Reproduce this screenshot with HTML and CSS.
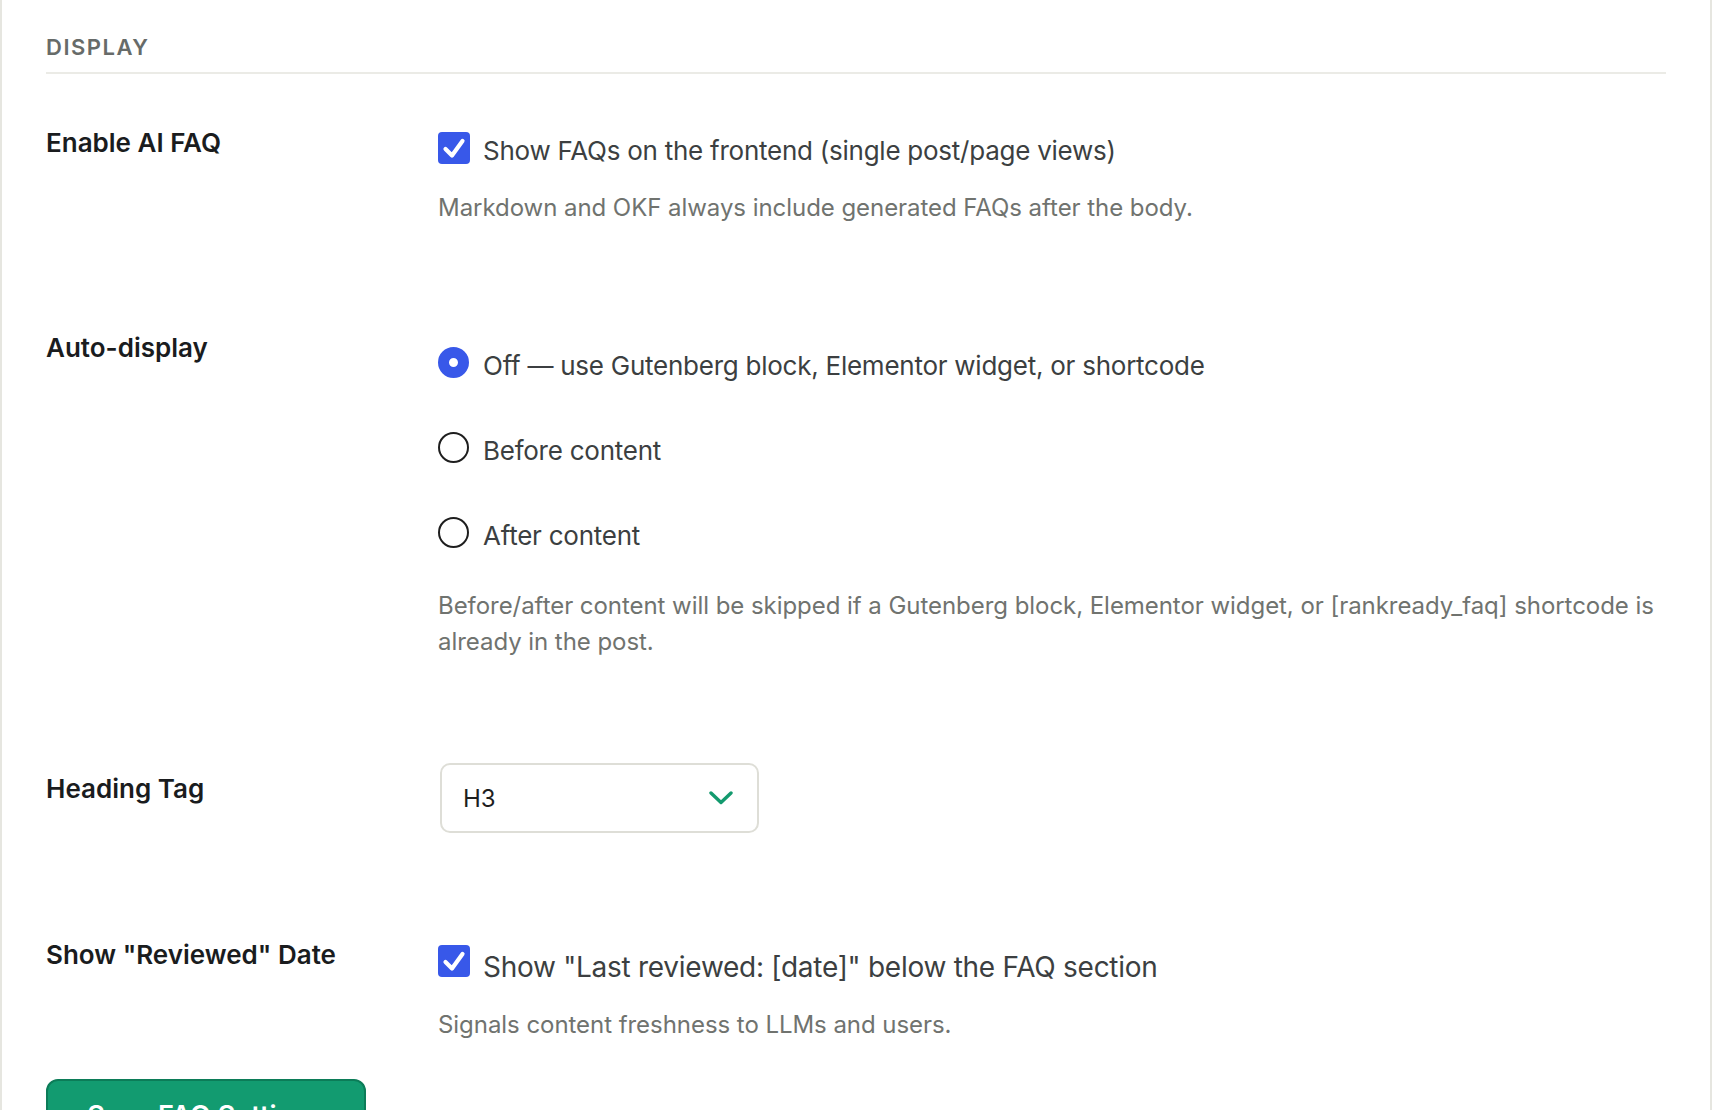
FILE: index.html
```html
<!DOCTYPE html>
<html lang="en">
<head>
  <meta charset="UTF-8" />
  <meta name="viewport" content="width=device-width, initial-scale=1.0"/>
  <title>FAQ Settings</title>
  <link rel="stylesheet" href="styles.css">
</head>
<body>
<div class="card">
  <h2 class="section-title">Display</h2>

  <!-- Enable -->
  <div class="field field-enable">
    <div class="field-label">Enable AI FAQ</div>
    <div class="field-control">
      <label class="option">
        <span class="checkbox">
          <svg width="32" height="32" viewBox="0 0 32 32"><path d="M7.5 17 L14 23.5 L24.5 9" fill="none" stroke="#fff" stroke-width="4.2" stroke-linecap="round" stroke-linejoin="round"/></svg>
        </span>
        <span class="option-text">Show FAQs on the frontend (single post/page views)</span>
      </label>
      <p class="desc">Markdown and OKF always include generated FAQs after the body.</p>
    </div>
  </div>

  <!-- Auto display -->
  <div class="field field-auto">
    <div class="field-label">Auto-display</div>
    <div class="field-control">
      <div class="radio-list">
        <label class="option">
          <span class="radio checked"></span>
          <span class="option-text">Off — use Gutenberg block, Elementor widget, or shortcode</span>
        </label>
        <label class="option">
          <span class="radio"></span>
          <span class="option-text">Before content</span>
        </label>
        <label class="option">
          <span class="radio"></span>
          <span class="option-text">After content</span>
        </label>
      </div>
      <p class="desc">Before/after content will be skipped if a Gutenberg block, Elementor widget, or [rankready_faq] shortcode is already in the post.</p>
    </div>
  </div>

  <!-- Heading tag -->
  <div class="field field-heading">
    <div class="field-label">Heading Tag</div>
    <div class="field-control">
      <div class="select">
        <span>H3</span>
        <svg width="24" height="14" viewBox="0 0 24 14"><polyline points="2,2 12,11.5 22,2" fill="none" stroke="#139a6e" stroke-width="3.4" stroke-linecap="round" stroke-linejoin="round"/></svg>
      </div>
    </div>
  </div>

  <!-- Reviewed date -->
  <div class="field field-reviewed">
    <div class="field-label">Show "Reviewed" Date</div>
    <div class="field-control">
      <label class="option">
        <span class="checkbox">
          <svg width="32" height="32" viewBox="0 0 32 32"><path d="M7.5 17 L14 23.5 L24.5 9" fill="none" stroke="#fff" stroke-width="4.2" stroke-linecap="round" stroke-linejoin="round"/></svg>
        </span>
        <span class="option-text">Show "Last reviewed: [date]" below the FAQ section</span>
      </label>
      <p class="desc">Signals content freshness to LLMs and users.</p>
    </div>
  </div>

  <button class="btn-save" type="button">Save FAQ Settings</button>
</div>
</body>
</html>
```

FILE: styles.css
```css
* {
  margin: 0;
  padding: 0;
  box-sizing: border-box;
}

html, body {
  height: 1110px;
  overflow: hidden;
}

body {
  font-family: Inter, "Noto Sans", sans-serif;
  background: #fff;
  color: #1d2327;
}

.card {
  border-left: 2px solid #e6e6e0;
  border-right: 2px solid #e6e6e0;
  padding: 31px 44px 0;
  min-height: 1200px;
}

.section-title {
  font-size: 22px;
  line-height: 32px;
  font-weight: 600;
  letter-spacing: 1.5px;
  text-transform: uppercase;
  color: #676b69;
  padding-bottom: 9px;
  border-bottom: 2px solid #ebebe6;
}

.field {
  display: grid;
  grid-template-columns: 392px 1fr;
  align-items: start;
  padding: 51px 0 52px;
}

.field-label {
  font-size: 26px;
  line-height: 36px;
  font-weight: 600;
  color: #1a1c1e;
}

.option {
  display: flex;
  align-items: flex-start;
  gap: 13px;
}

.option-text {
  font-size: 26px;
  line-height: 38px;
  letter-spacing: -0.25px;
  color: #3c3f41;
}

.checkbox {
  width: 32px;
  height: 32px;
  flex: none;
  border-radius: 4px;
  background: #3858e9;
}

.checkbox svg {
  display: block;
}

.radio {
  width: 31px;
  height: 31px;
  flex: none;
  border-radius: 50%;
  border: 2px solid #1e1e1e;
  margin-right: 1px;
}

.radio.checked {
  border: 11px solid #3858e9;
}

.radio-list {
  display: flex;
  flex-direction: column;
  gap: 47px;
}

.desc {
  font-size: 24px;
  line-height: 36px;
  letter-spacing: -0.05px;
  color: #70736f;
  margin-top: 20px;
}

/* per-row offsets */
.field-enable { padding-bottom: 51px; }
.field-enable .field-control { padding-top: 7px; }
.field-auto { padding-bottom: 47px; }
.field-auto .field-label { padding-top: 2px; }
.field-auto .field-control { padding-top: 19px; }
.field-auto .desc { margin-top: 33px; }
.field-heading .field-label { padding-top: 13px; }
.field-heading .field-control { padding-top: 5px; }
.field-reviewed { padding-bottom: 36px; }
.field-reviewed .field-label { padding-top: 1px; }
.field-reviewed .field-control { padding-top: 9px; }
.field-reviewed .option-text {
  margin-top: 3px;
  font-size: 28px;
  letter-spacing: -0.27px;
}
.field-reviewed .desc { margin-top: 21px; }

.select {
  width: 319px;
  height: 70px;
  margin-left: 2px;
  border: 2px solid #deded7;
  border-radius: 10px;
  display: flex;
  align-items: center;
  justify-content: space-between;
  padding: 0 24px 0 21px;
  font-size: 24px;
  color: #1e1e1e;
}

.select svg {
  display: block;
}

.btn-save {
  width: 320px;
  height: 73px;
  background: #129b70;
  border: 2px solid #0c7c58;
  border-radius: 12px;
  color: #fff;
  font-family: Inter, "Noto Sans", sans-serif;
  font-size: 27px;
  font-weight: 600;
  cursor: pointer;
}
```
